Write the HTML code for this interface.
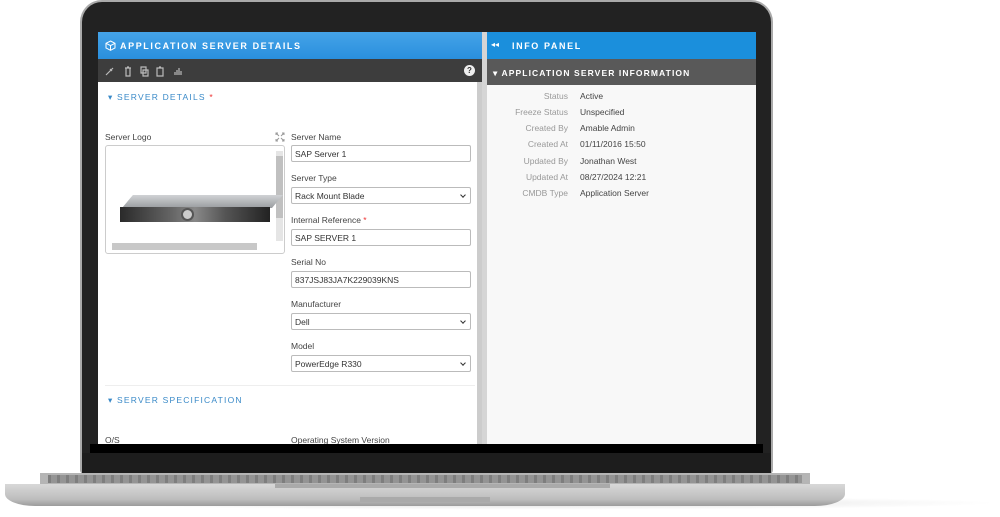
<!DOCTYPE html>
<html><head><style>
*{margin:0;padding:0;box-sizing:border-box}
body{width:1000px;height:517px;background:#fff;position:relative;overflow:hidden;font-family:"Liberation Sans",sans-serif}
.a{position:absolute}
.lbl{position:absolute;font-size:8.5px;color:#444}
.inp{position:absolute;height:17px;border:1px solid #bbb;border-radius:2px;font-size:8.5px;color:#333;padding:3px 3px;background:#fff}
.sel::after{content:"";position:absolute;right:5px;top:5px;width:3px;height:3px;border-right:1px solid #333;border-bottom:1px solid #333;transform:rotate(45deg)}
.ik{position:absolute;font-size:8.5px;color:#999;text-align:right;width:80px;left:488px}
.iv{position:absolute;font-size:8.5px;color:#444;left:580px}
</style></head><body>
<div class="a" style="left:60px;top:496px;width:940px;height:14px;background:radial-gradient(ellipse at center,#ddd,#fff 70%)"></div>
<!-- laptop lid -->
<div class="a" style="left:80px;top:0;width:693px;height:474px;background:#222;border-radius:22px 22px 4px 4px;border:2px solid #aaa;border-bottom:none"></div>
<div class="a" style="left:90px;top:444px;width:673px;height:9px;background:#000"></div>
<div class="a" style="left:82px;top:453px;width:689px;height:20px;background:#1d1d1d"></div>
<!-- base -->
<div class="a" style="left:40px;top:473px;width:770px;height:13px;background:#b5b5b5"></div>
<div class="a" style="left:48px;top:475px;width:754px;height:8px;background:repeating-linear-gradient(90deg,#707070 0 3px,#8c8c8c 3px 9px);opacity:.8"></div>
<div class="a" style="left:5px;top:484px;width:840px;height:22px;background:linear-gradient(#d8d8d8,#bdbdbd 70%,#9c9c9c);border-radius:0 0 30px 30px/0 0 12px 12px"></div>
<div class="a" style="left:275px;top:484px;width:335px;height:4px;background:#aaa"></div>
<div class="a" style="left:360px;top:497px;width:130px;height:5px;background:#aaa"></div>
<!-- screen -->
<div class="a" style="left:98px;top:32px;width:658px;height:412px;background:#fff;overflow:hidden">
 <div class="a" style="left:0;top:0;width:384px;height:27px;background:linear-gradient(#45a3e8,#2a8fdd);color:#fff;font-size:9px;letter-spacing:1.6px;padding:9px 0 0 22px;font-weight:bold">APPLICATION SERVER DETAILS</div>
 <svg class="a" style="left:7px;top:8px" width="11" height="11" viewBox="0 0 11 11" fill="none" stroke="#fff" stroke-width="1"><path d="M5.5 1L10 3.3V8L5.5 10.3 1 8V3.3Z M1 3.3L5.5 5.6 10 3.3 M5.5 5.6V10.3"/></svg>
 <div class="a" style="left:0;top:27px;width:384px;height:23px;background:#3d3d3d"></div>
 <svg class="a" style="left:6px;top:33px" width="90" height="12" viewBox="0 0 90 12" fill="none" stroke="#bbb" stroke-width="1.2">
  <path d="M2 10L9 3 M6 4l2 2"/>
  <path d="M21 3h6 M22 3v8h4V3 M23 2h2"/>
  <path d="M37 2h5v6h-5z M39 5h5v6h-5z"/>
  <path d="M53 3h6v8h-6z M55 2h2"/>
  <path d="M71 10v-3 M73 10V5 M75 10V3 M77 10V6"/>
 </svg>
 <div class="a" style="left:366px;top:33px;width:11px;height:11px;background:#eee;border-radius:50%;font-size:8px;font-weight:bold;color:#333;text-align:center;line-height:11px">?</div>
 <div class="a" style="left:379px;top:50px;width:5px;height:362px;background:#ccc"></div>
 <div class="a" style="left:384px;top:0;width:5px;height:412px;background:#d5d5d5"></div>
 <div class="a" style="left:10px;top:60px;font-size:8.5px;color:#3a8ac8;letter-spacing:1.2px">▾ SERVER DETAILS <span style="color:#e33">*</span></div>
 <div class="lbl" style="left:7px;top:100px">Server Logo</div>
 <svg class="a" style="left:177px;top:100px" width="10" height="10" viewBox="0 0 10 10" stroke="#999" fill="none"><path d="M1 3V1h2 M7 1h2v2 M9 7v2H7 M3 9H1V7 M1 1l3 3 M9 1L6 4 M9 9L6 6 M1 9l3-3"/></svg>
 <div class="a" style="left:7px;top:113px;width:180px;height:109px;border:1px solid #ccc;border-radius:3px;background:#fff"></div>
 <div class="a" style="left:178px;top:119px;width:7px;height:90px;background:#e5e5e5"></div>
 <div class="a" style="left:178px;top:124px;width:7px;height:62px;background:#c0c0c0"></div>
 <div class="a" style="left:14px;top:211px;width:145px;height:7px;background:#c8c8c8"></div>
 <div class="a" style="left:24px;top:163px;width:150px;height:13px;background:linear-gradient(#d0d2d5,#9a9da0);transform:skewX(-40deg);transform-origin:bottom"></div>
 <div class="a" style="left:22px;top:175px;width:150px;height:15px;background:linear-gradient(90deg,#2a2a2a,#666 35%,#888 50%,#555 70%,#222)"></div>
 <div class="a" style="left:83px;top:176px;width:13px;height:13px;border-radius:50%;background:#ccc;border:2px solid #555"></div>
 <div class="lbl" style="left:193px;top:100px">Server Name</div>
 <div class="inp" style="left:193px;top:113px;width:180px">SAP Server 1</div>
 <div class="lbl" style="left:193px;top:141px">Server Type</div>
 <div class="inp sel" style="left:193px;top:155px;width:180px">Rack Mount Blade</div>
 <div class="lbl" style="left:193px;top:183px">Internal Reference <span style="color:#e33">*</span></div>
 <div class="inp" style="left:193px;top:197px;width:180px">SAP SERVER 1</div>
 <div class="lbl" style="left:193px;top:225px">Serial No</div>
 <div class="inp" style="left:193px;top:239px;width:180px">837JSJ83JA7K229039KNS</div>
 <div class="lbl" style="left:193px;top:267px">Manufacturer</div>
 <div class="inp sel" style="left:193px;top:281px;width:180px">Dell</div>
 <div class="lbl" style="left:193px;top:309px">Model</div>
 <div class="inp sel" style="left:193px;top:323px;width:180px">PowerEdge R330</div>
 <div class="a" style="left:7px;top:353px;width:370px;height:1px;background:#eee"></div>
 <div class="a" style="left:10px;top:363px;font-size:8.5px;color:#3a8ac8;letter-spacing:1.2px">▾ SERVER SPECIFICATION</div>
 <div class="lbl" style="left:7px;top:403px">O/S</div>
 <div class="lbl" style="left:193px;top:403px">Operating System Version</div>
 <div class="a" style="left:389px;top:0;width:269px;height:27px;background:#1b8fdc;color:#fff;font-size:9px;letter-spacing:1.6px;padding:9px 0 0 25px;font-weight:bold">INFO PANEL</div>
 <div class="a" style="left:393px;top:8px;color:#fff;font-size:8px">◂◂</div>
 <div class="a" style="left:389px;top:27px;width:269px;height:26px;background:#595959;color:#fff;font-size:8.5px;letter-spacing:1.1px;padding:9px 0 0 6px;font-weight:bold">▾ APPLICATION SERVER INFORMATION</div>
 <div class="a" style="left:389px;top:53px;width:269px;height:359px;background:#f8f8f8"></div>
</div>
<div class="ik" style="top:91px">Status</div><div class="iv" style="top:91px">Active</div>
<div class="ik" style="top:107px">Freeze Status</div><div class="iv" style="top:107px">Unspecified</div>
<div class="ik" style="top:123px">Created By</div><div class="iv" style="top:123px">Amable Admin</div>
<div class="ik" style="top:139px">Created At</div><div class="iv" style="top:139px">01/11/2016 15:50</div>
<div class="ik" style="top:156px">Updated By</div><div class="iv" style="top:156px">Jonathan West</div>
<div class="ik" style="top:172px">Updated At</div><div class="iv" style="top:172px">08/27/2024 12:21</div>
<div class="ik" style="top:188px">CMDB Type</div><div class="iv" style="top:188px">Application Server</div>
</body></html>
